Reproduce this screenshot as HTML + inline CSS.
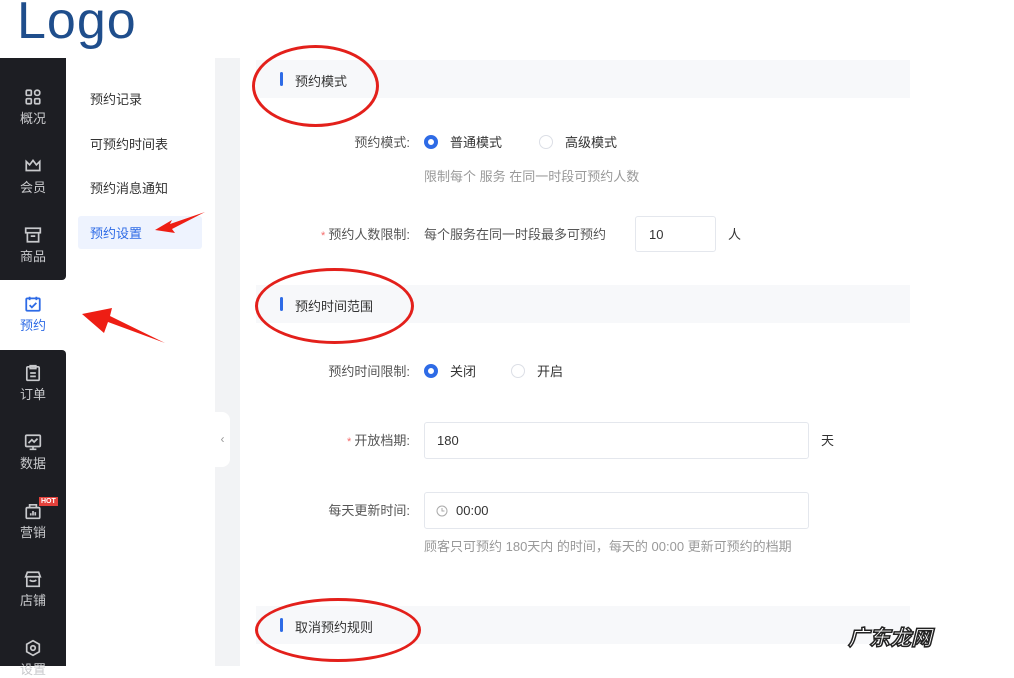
<!DOCTYPE html>
<html><head><meta charset="utf-8"><style>
*{margin:0;padding:0;box-sizing:border-box}
body{width:1014px;height:666px;overflow:hidden;background:#fff;font-family:"Liberation Sans","Noto Sans CJK SC",sans-serif;position:relative;font-size:13px;color:#333}
.a{position:absolute}
.logo{left:17px;top:-9px;font-size:52px;color:#1f4e8c;font-family:"Liberation Sans",sans-serif;letter-spacing:1px}
.side{left:0;width:66px;background:#1d1e23}
.it{position:absolute;left:0;width:66px;text-align:center;color:#c8c9cc;font-size:13px}
.it svg{display:block;margin:0 auto 2px}
.sub{left:90px;color:#333;font-size:13px}
.hd{left:256px;width:654px;height:38px;background:#f7f8fa}
.hd i{position:absolute;left:24px;top:12px;width:3px;height:14px;background:#2e6be6;border-radius:2px}
.hd span{position:absolute;left:39px;top:11px;font-size:13px;color:#333}
.lb{color:#555;text-align:right;width:200px}
.st{color:#f56c6c;font-size:11px}
.rad{width:14px;height:14px;border-radius:50%;border:1px solid #dcdfe6}
.rad.on{border:4px solid #2e6be6}
.hint{color:#999;font-size:13px}
.inp{border:1px solid #e4e7ed;border-radius:3px;padding:0 0 0 14px;display:flex;align-items:center;color:#333}
.ell{border:3px solid #e3201b;border-radius:50%}
</style></head><body>
<div class="a logo">Logo</div>
<div class="a side" style="top:58px;height:222px;border-bottom-right-radius:4px"></div>
<div class="a side" style="top:350px;height:316px;border-top-right-radius:4px"></div>
<div class="a" style="left:215px;top:58px;width:25px;height:608px;background:#f2f3f5"></div>
<div class="a" style="left:215px;top:412px;width:15px;height:55px;background:#fff;border-radius:0 8px 8px 0;color:#999;font-size:12px;line-height:55px;text-align:center">‹</div>

<div class="it" style="top:88px"><svg width="18" height="18" viewBox="0 0 16 16" fill="none" stroke="#c8c9cc" stroke-width="1.5"><rect x="2" y="2" width="4.5" height="4.5" rx="1"/><rect x="9.5" y="2" width="4.5" height="4.5" rx="2"/><rect x="2" y="9.5" width="4.5" height="4.5" rx="1"/><rect x="9.5" y="9.5" width="4.5" height="4.5" rx="1"/></svg>概况</div>
<div class="it" style="top:157px"><svg width="18" height="18" viewBox="0 0 16 16" fill="none" stroke="#c8c9cc" stroke-width="1.5"><path d="M2 4l3 3 3-4 3 4 3-3v8H2z"/></svg>会员</div>
<div class="it" style="top:226px"><svg width="18" height="18" viewBox="0 0 16 16" fill="none" stroke="#c8c9cc" stroke-width="1.5"><rect x="1.5" y="2" width="13" height="4"/><path d="M3 6v8h10V6M6 9h4"/></svg>商品</div>
<div class="it" style="top:295px;color:#2e6be6"><svg width="18" height="18" viewBox="0 0 16 16" fill="none" stroke="#2e6be6" stroke-width="1.6"><rect x="2" y="3" width="12" height="11" rx="1"/><path d="M5 1.5v3M11 1.5v3M5 9l2 2 4-4"/></svg>预约</div>
<div class="it" style="top:364px"><svg width="18" height="18" viewBox="0 0 16 16" fill="none" stroke="#c8c9cc" stroke-width="1.5"><rect x="2.5" y="2.5" width="11" height="12" rx="1"/><path d="M5.5 1.5h5v2.5h-5zM5.5 8h5M5.5 11h5"/></svg>订单</div>
<div class="it" style="top:433px"><svg width="18" height="18" viewBox="0 0 16 16" fill="none" stroke="#c8c9cc" stroke-width="1.5"><rect x="1.5" y="2" width="13" height="10" rx="1"/><path d="M4 9l3-3 2 2 3-3M8 12v2M5 14.5h6"/></svg>数据</div>
<div class="a" style="left:39px;top:497px;background:#e3413b;color:#fff;font-size:7px;padding:0 2px;line-height:9px;font-weight:bold">HOT</div>
<div class="it" style="top:502px"><svg width="18" height="18" viewBox="0 0 16 16" fill="none" stroke="#c8c9cc" stroke-width="1.5"><rect x="2" y="5" width="12" height="9.5" rx="1"/><path d="M5 5V2.5h6V5M6 12v-2M8 12V8M10 12v-3"/></svg>营销</div>
<div class="it" style="top:570px"><svg width="18" height="18" viewBox="0 0 16 16" fill="none" stroke="#c8c9cc" stroke-width="1.5"><path d="M3 2h10l1.5 4h-13zM2.5 6v8.5h11V6M5 9q3 2 6 0"/></svg>店铺</div>
<div class="it" style="top:639px"><svg width="18" height="18" viewBox="0 0 16 16" fill="none" stroke="#c8c9cc" stroke-width="1.5"><path d="M8 1.5l5.6 3.2v6.6L8 14.5 2.4 11.3V4.7z"/><circle cx="8" cy="8" r="2"/></svg>设置</div>

<div class="a sub" style="top:89px">预约记录</div>
<div class="a sub" style="top:134px">可预约时间表</div>
<div class="a sub" style="top:178px">预约消息通知</div>
<div class="a" style="left:78px;top:216px;width:124px;height:33px;background:#eef3fe;border-radius:3px"></div>
<div class="a sub" style="top:223px;color:#2e6be6">预约设置</div>

<div class="a hd" style="top:60px"><i></i><span>预约模式</span></div>
<div class="a lb" style="left:210px;top:132px">预约模式:</div>
<div class="a rad on" style="left:424px;top:135px"></div><div class="a" style="left:450px;top:132px">普通模式</div>
<div class="a rad" style="left:539px;top:135px"></div><div class="a" style="left:565px;top:132px">高级模式</div>
<div class="a hint" style="left:424px;top:166px">限制每个 服务 在同一时段可预约人数</div>
<div class="a lb" style="left:210px;top:224px"><span class="st">* </span>预约人数限制:</div>
<div class="a" style="left:424px;top:224px;color:#555">每个服务在同一时段最多可预约</div>
<div class="a inp" style="left:635px;top:216px;width:81px;height:36px;padding-left:13px">10</div>
<div class="a" style="left:728px;top:224px">人</div>

<div class="a hd" style="top:285px"><i></i><span>预约时间范围</span></div>
<div class="a lb" style="left:210px;top:361px">预约时间限制:</div>
<div class="a rad on" style="left:424px;top:364px"></div><div class="a" style="left:450px;top:361px">关闭</div>
<div class="a rad" style="left:511px;top:364px"></div><div class="a" style="left:537px;top:361px">开启</div>
<div class="a lb" style="left:210px;top:430px"><span class="st">* </span>开放档期:</div>
<div class="a inp" style="left:424px;top:422px;width:385px;height:37px;padding-left:12px">180</div>
<div class="a" style="left:821px;top:430px">天</div>
<div class="a lb" style="left:210px;top:500px">每天更新时间:</div>
<div class="a inp" style="left:424px;top:492px;width:385px;height:37px;padding-left:11px"><svg width="12" height="12" viewBox="0 0 12 12" fill="none" stroke="#aaa" stroke-width="1"><circle cx="6" cy="6" r="5"/><path d="M6 3v3h2.5"/></svg><span style="margin-left:8px">00:00</span></div>
<div class="a hint" style="left:424px;top:536px">顾客只可预约 180天内 的时间，每天的 00:00 更新可预约的档期</div>

<div class="a hd" style="top:606px"><i></i><span>取消预约规则</span></div>

<div class="a ell" style="left:252px;top:45px;width:127px;height:82px"></div>
<div class="a ell" style="left:255px;top:268px;width:159px;height:76px"></div>
<div class="a ell" style="left:255px;top:598px;width:166px;height:64px"></div>
<svg class="a" style="left:0;top:0" width="1014" height="666"><path d="M205 212L170 224L172 220L155 230L175 233L172 229z" fill="#ee1e14"/><path d="M82 314L112 308L110 316L165 343L108 322L104 333z" fill="#ee1e14"/></svg>
<div class="a" style="left:848px;top:622px;font-size:21px;font-weight:bold;color:#fff;-webkit-text-stroke:1.5px #222;font-style:italic">广东龙网</div>
</body></html>
